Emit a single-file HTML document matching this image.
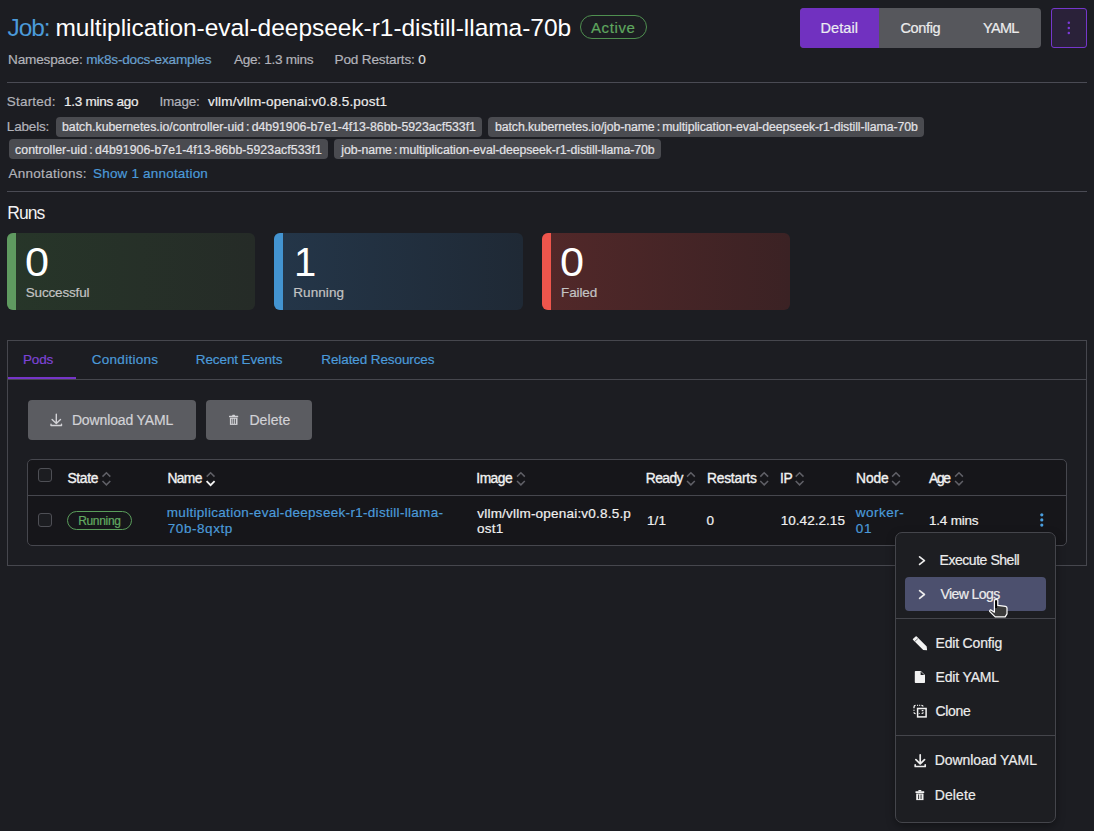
<!DOCTYPE html>
<html><head><meta charset="utf-8">
<style>
*{box-sizing:border-box;margin:0;padding:0}
html,body{width:1094px;height:831px;overflow:hidden;background:#1c1d22;font-family:"Liberation Sans",sans-serif}
.s{position:absolute}
.t{position:absolute;white-space:nowrap;line-height:1}
.bm{display:inline-block;width:0;height:0;vertical-align:baseline}
.hr{position:absolute;left:7px;width:1080px;height:1px;background:#4a4b54}
.chip{height:20px;background:#4a4b50;border-radius:4px}
.card{top:233px;width:248px;height:77px;border-radius:6px;overflow:hidden}
.card .bar{position:absolute;left:0;top:0;bottom:0;width:9px}
.btn{top:400px;height:40px;background:#5b5c61;border-radius:4px}
.cb{left:38px;width:14px;height:14px;border:1.5px solid #4e4f55;border-radius:3px;background:#1c1d21}
</style></head><body>
<!-- Active badge -->
<div class="s" style="left:580px;top:15px;width:67px;height:24px;border:1px solid #4f8f50;border-radius:12px"></div>

<!-- Button group -->
<div class="s" style="left:800px;top:8px;width:241px;height:40px;border-radius:4px;background:#56575c;overflow:hidden">
  <div class="s" style="left:0;top:0;width:79px;height:40px;background:#7131c0"></div>
</div>
<div class="s" style="left:1051px;top:8px;width:36px;height:40px;border:1px solid #7537cc;border-radius:3px;background:#2a2139"></div>
<svg class="s" style="left:1051px;top:8px" width="36" height="40" viewBox="0 0 36 40"><g fill="#7b3ad9"><circle cx="17.8" cy="14.8" r="1.25"/><circle cx="17.8" cy="19.9" r="1.25"/><circle cx="17.8" cy="25.1" r="1.25"/></g></svg>

<div class="hr" style="top:82px"></div>

<!-- chips -->
<div class="s chip" style="left:56px;top:116.5px;width:426px"></div>
<div class="s chip" style="left:488px;top:116.5px;width:436px"></div>
<div class="s chip" style="left:9px;top:139.2px;width:319px"></div>
<div class="s chip" style="left:334px;top:139.2px;width:327px"></div>

<div class="hr" style="top:191px"></div>

<!-- Cards -->
<div class="s card" style="left:7px;background:linear-gradient(90deg,#273629 0%,#252b27 100%)"><div class="bar" style="background:#5f9a60"></div></div>
<div class="s card" style="left:274px;width:248.6px;background:linear-gradient(90deg,#243649 0%,#1f2935 100%)"><div class="bar" style="background:#4394d1"></div></div>
<div class="s card" style="left:542px;background:linear-gradient(90deg,#522829 0%,#3b2224 100%)"><div class="bar" style="background:#ee554c"></div></div>

<!-- Tabs panel -->
<div class="s" style="left:7px;top:340px;width:1080px;height:226px;border:1px solid #46474e"></div>
<div class="s" style="left:8px;top:379px;width:1078px;height:1px;background:#46474e"></div>
<div class="s" style="left:8px;top:377px;width:68px;height:2px;background:#7535c8"></div>

<!-- Buttons -->
<div class="s btn" style="left:28px;width:168px"></div>
<div class="s btn" style="left:206px;width:106px"></div>
<svg class="s" style="left:48px;top:411px" width="16" height="17" viewBox="0 0 16 17"><g fill="none" stroke="#d2d2d6" stroke-width="1.4" stroke-linecap="round" stroke-linejoin="round"><path d="M8.3 3.2V12.2M4.1 8.6L8.3 12.6L12.5 8.6"/><path d="M3 13.3V14.5H13.5V13.3"/></g></svg>
<svg class="s" style="left:227px;top:413px" width="14" height="14" viewBox="0 0 14 14"><g fill="#d2d2d6"><rect x="2" y="2.7" width="9.2" height="1.6" rx=".4"/><rect x="5.2" y="1.7" width="2.8" height="1.4" rx=".5"/><path d="M2.9 4.7H10.5V11.9H2.9Z"/></g><g fill="#5b5c61"><rect x="4.4" y="5.8" width=".9" height="5"/><rect x="6.25" y="5.8" width=".9" height="5"/><rect x="8.1" y="5.8" width=".9" height="5"/></g></svg>

<!-- Table -->
<div class="s" style="left:27px;top:459px;width:1040px;height:87px;border:1px solid #46474e;border-radius:5px;background:#16161a"></div>
<div class="s" style="left:28px;top:495px;width:1038px;height:1px;background:#46474e"></div>
<div class="s cb" style="top:468px"></div>
<div class="s cb" style="top:513px"></div>
<svg class="s" style="left:0;top:460px" width="1094" height="30" viewBox="0 460 1094 30"><g fill="none" stroke="#606067" stroke-width="1.5" stroke-linecap="butt" stroke-linejoin="miter"><path d="M102.5 476.6L106.4 472.7L110.3 476.6M102.5 481L106.4 484.9L110.3 481"/><path d="M517.0 476.6L520.9 472.7L524.8 476.6M517.0 481L520.9 484.9L524.8 481"/><path d="M687.0 476.6L690.9 472.7L694.8 476.6M687.0 481L690.9 484.9L694.8 481"/><path d="M760.3 476.6L764.2 472.7L768.1 476.6M760.3 481L764.2 484.9L768.1 481"/><path d="M795.7 476.6L799.6 472.7L803.5 476.6M795.7 481L799.6 484.9L803.5 481"/><path d="M892.1 476.6L896.0 472.7L899.9 476.6M892.1 481L896.0 484.9L899.9 481"/><path d="M955.1 476.6L959.0 472.7L962.9 476.6M955.1 481L959.0 484.9L962.9 481"/><path d="M206.7 476.6L210.6 472.7L214.5 476.6"/></g><path d="M206.6 481.2L210.6 485.2L214.6 481.2" fill="none" stroke="#f4f4f4" stroke-width="1.8" stroke-linecap="butt"/></svg>
<div class="s" style="left:67px;top:511px;width:65px;height:19px;border:1px solid #5a9d5b;border-radius:10px"></div>
<svg class="s" style="left:1032px;top:508px" width="20" height="24" viewBox="0 0 20 24"><g fill="#4a9fe0"><circle cx="9.8" cy="6.8" r="1.6"/><circle cx="9.8" cy="11.9" r="1.6"/><circle cx="9.8" cy="17.1" r="1.6"/></g></svg>

<!-- Menu -->
<div class="s" style="left:895px;top:532px;width:161px;height:291px;border:1px solid #44454b;border-radius:7px;background:#1d1e22;box-shadow:0 3px 8px rgba(0,0,0,.35)"></div>
<div class="s" style="left:905px;top:577px;width:141px;height:34px;border-radius:4px;background:#4c506e"></div>
<div class="s" style="left:896px;top:618px;width:159px;height:1px;background:#44454b"></div>
<div class="s" style="left:896px;top:735px;width:159px;height:1px;background:#44454b"></div>
<svg class="s" style="left:900px;top:540px" width="160" height="280" viewBox="900 540 160 280">
<g fill="none" stroke="#ececec" stroke-width="1.7" stroke-linecap="round" stroke-linejoin="round">
<path d="M919.6 556.8L924.4 560.6L919.6 564.4"/>
<path d="M919.6 590.7L924.4 594.5L919.6 598.3"/>
<path d="M920.2 754.8V763.3M915.9 759.7L920.2 763.9L924.5 759.7M915.2 764.8V766.5H925.2V764.8"/>
</g>
<g fill="#f2f2f2">
<path d="M912.9 639.7Q912.6 639.2 913.1 638.7L915.6 636.5Q916.2 636.1 916.7 636.6L926.7 646.4L927.1 650.3L923.2 650Z"/>
<path d="M915.6 671L920.8 671L925 675V682.2Q925 683 924.2 683H915.6Q914.8 683 914.8 682.2V671.8Q914.8 671 915.6 671Z"/>
<rect x="915.4" y="791.3" width="8.9" height="1.6" rx=".4"/><rect x="918.3" y="790" width="3.1" height="1.5" rx=".5"/><path d="M916.2 793.5H923.5V800.1H916.2Z"/>
</g>
<path d="M920.6 671.6V675.1H924.3" fill="#1d1e22"/>
<path d="M914.9 641.3L917.9 638.6" stroke="#1d1e22" stroke-width=".6"/>
<g fill="#1d1e22"><rect x="918.2" y="794.5" width=".9" height="4.6"/><rect x="920.6" y="794.5" width=".9" height="4.6"/></g>
<g fill="none" stroke="#f2f2f2" stroke-width="1.5">
<rect x="917.6" y="708.5" width="8.5" height="8.4"/>
<path d="M914 708.2V707Q914 705.3 915.6 705.3M917.1 705.3H918.1M919.2 705.3H920.2M921.4 705.3Q923 705.3 923 706.6M914 709.8V710.8M914 712.2Q914 713.7 915.6 713.7" stroke-width="1.3"/>
<path d="M921.7 710.6H923.4M923.2 712.2Q923.2 713.5 921.6 713.5M919.3 713.3V713.9" stroke-width="1.1"/>
</g>
</svg>

<div class="t" id="titlej" style="left:7.50px;top:15.72px;font-size:24.5px;letter-spacing:-1.067px;font-weight:400;color:#4b9ad9">Job:</div>
<div class="t" id="title" style="left:55.50px;top:15.72px;font-size:24.5px;letter-spacing:-0.038px;font-weight:400;color:#ffffff">multiplication-eval-deepseek-r1-distill-llama-70b</div>
<div class="t" id="active" style="left:591.00px;top:19.72px;font-size:15px;letter-spacing:0.600px;font-weight:400;color:#5fa65f;-webkit-text-stroke:.2px #5fa65f">Active</div>
<div class="t" id="detail" style="left:820.50px;top:20.70px;font-size:14.5px;letter-spacing:0.080px;font-weight:400;color:#ececf2;-webkit-text-stroke:.2px #ececf2">Detail</div>
<div class="t" id="config" style="left:900.50px;top:20.70px;font-size:14.5px;letter-spacing:-0.360px;font-weight:400;color:#ececec;-webkit-text-stroke:.2px #ececec">Config</div>
<div class="t" id="yaml" style="left:983.10px;top:20.81px;font-size:14.5px;letter-spacing:-0.733px;font-weight:400;color:#ececec;-webkit-text-stroke:.2px #ececec">YAML</div>
<div class="t" id="ns" style="left:8.00px;top:52.90px;font-size:13.6px;letter-spacing:-0.179px;font-weight:400;color:#b2b3ba;-webkit-text-stroke:.2px #b2b3ba">Namespace: <span style="color:#4b9ad9">mk8s-docs-examples</span></div>
<div class="t" id="age" style="left:234.00px;top:52.90px;font-size:13.6px;letter-spacing:-0.300px;font-weight:400;color:#b2b3ba;-webkit-text-stroke:.2px #b2b3ba">Age: 1.3 mins</div>
<div class="t" id="podr" style="left:334.50px;top:52.90px;font-size:13.6px;letter-spacing:-0.171px;font-weight:400;color:#b2b3ba;-webkit-text-stroke:.2px #b2b3ba">Pod Restarts: <span style="color:#ececec">0</span></div>
<div class="t" id="started" style="left:6.80px;top:94.70px;font-size:13.5px;letter-spacing:0.200px;font-weight:400;color:#b2b3ba;-webkit-text-stroke:.2px #b2b3ba">Started:</div>
<div class="t" id="startedv" style="left:64.10px;top:94.70px;font-size:13.5px;letter-spacing:-0.273px;font-weight:400;color:#ececec;-webkit-text-stroke:.2px #ececec">1.3 mins ago</div>
<div class="t" id="imagel" style="left:159.50px;top:94.70px;font-size:13.5px;letter-spacing:-0.200px;font-weight:400;color:#b2b3ba;-webkit-text-stroke:.2px #b2b3ba">Image:</div>
<div class="t" id="imagev" style="left:208.00px;top:94.70px;font-size:13.5px;letter-spacing:0.179px;font-weight:400;color:#ececec;-webkit-text-stroke:.2px #ececec">vllm/vllm-openai:v0.8.5.post1</div>
<div class="t" id="labels" style="left:6.80px;top:120.10px;font-size:13.5px;letter-spacing:-0.167px;font-weight:400;color:#b2b3ba;-webkit-text-stroke:.2px #b2b3ba">Labels:</div>
<div class="t" id="chip1" style="left:62.00px;top:120.91px;font-size:12.3px;letter-spacing:0.000px;font-weight:400;color:#e2e2e6;-webkit-text-stroke:.2px #e2e2e6;word-spacing:-1.2px">batch.kubernetes.io/controller-uid : d4b91906-b7e1-4f13-86bb-5923acf533f1</div>
<div class="t" id="chip2" style="left:495.00px;top:120.91px;font-size:12.3px;letter-spacing:-0.086px;font-weight:400;color:#e2e2e6;-webkit-text-stroke:.2px #e2e2e6;word-spacing:-1.2px">batch.kubernetes.io/job-name : multiplication-eval-deepseek-r1-distill-llama-70b</div>
<div class="t" id="chip3" style="left:15.00px;top:143.71px;font-size:12.3px;letter-spacing:0.069px;font-weight:400;color:#e2e2e6;-webkit-text-stroke:.2px #e2e2e6;word-spacing:-1.2px">controller-uid : d4b91906-b7e1-4f13-86bb-5923acf533f1</div>
<div class="t" id="chip4" style="left:341.30px;top:143.71px;font-size:12.3px;letter-spacing:-0.095px;font-weight:400;color:#e2e2e6;-webkit-text-stroke:.2px #e2e2e6;word-spacing:-1.2px">job-name : multiplication-eval-deepseek-r1-distill-llama-70b</div>
<div class="t" id="annot" style="left:8.50px;top:166.90px;font-size:13.5px;letter-spacing:0.273px;font-weight:400;color:#b2b3ba;-webkit-text-stroke:.2px #b2b3ba">Annotations:</div>
<div class="t" id="show" style="left:93.00px;top:166.90px;font-size:13.5px;letter-spacing:0.188px;font-weight:400;color:#4b9ad9;-webkit-text-stroke:.2px #4b9ad9">Show 1 annotation</div>
<div class="t" id="runs" style="left:7.20px;top:204.70px;font-size:17.5px;letter-spacing:-0.933px;font-weight:400;color:#f2f2f2">Runs</div>
<div class="t" id="n1" style="left:24.70px;top:241.61px;font-size:40px;letter-spacing:0.000px;font-weight:400;color:#ffffff;transform:scaleX(1.08);transform-origin:0 0">0</div>
<div class="t" id="n2" style="left:294.00px;top:241.61px;font-size:40px;letter-spacing:0.000px;font-weight:400;color:#ffffff">1</div>
<div class="t" id="n3" style="left:560.30px;top:241.61px;font-size:40px;letter-spacing:0.000px;font-weight:400;color:#ffffff;transform:scaleX(1.08);transform-origin:0 0">0</div>
<div class="t" id="l1" style="left:25.70px;top:285.51px;font-size:13.5px;letter-spacing:-0.156px;font-weight:400;color:#c3c3c3;-webkit-text-stroke:.2px #c3c3c3">Successful</div>
<div class="t" id="l2" style="left:293.20px;top:285.51px;font-size:13.5px;letter-spacing:0.100px;font-weight:400;color:#c3c3c3;-webkit-text-stroke:.2px #c3c3c3">Running</div>
<div class="t" id="l3" style="left:561.00px;top:285.51px;font-size:13.5px;letter-spacing:-0.120px;font-weight:400;color:#c3c3c3;-webkit-text-stroke:.2px #c3c3c3">Failed</div>
<div class="t" id="tpods" style="left:22.90px;top:353.10px;font-size:13.5px;letter-spacing:-0.133px;font-weight:400;color:#7d44d6;-webkit-text-stroke:.2px #7d44d6">Pods</div>
<div class="t" id="tcond" style="left:91.80px;top:353.10px;font-size:13.5px;letter-spacing:0.267px;font-weight:400;color:#4b9ad9;-webkit-text-stroke:.2px #4b9ad9">Conditions</div>
<div class="t" id="trec" style="left:195.80px;top:353.10px;font-size:13.5px;letter-spacing:-0.100px;font-weight:400;color:#4b9ad9;-webkit-text-stroke:.2px #4b9ad9">Recent Events</div>
<div class="t" id="trel" style="left:321.30px;top:353.10px;font-size:13.5px;letter-spacing:-0.100px;font-weight:400;color:#4b9ad9;-webkit-text-stroke:.2px #4b9ad9">Related Resources</div>
<div class="t" id="bdl" style="left:71.90px;top:413.21px;font-size:14px;letter-spacing:-0.133px;font-weight:400;color:#d2d2d6;-webkit-text-stroke:.2px #d2d2d6">Download YAML</div>
<div class="t" id="bdel" style="left:249.40px;top:413.21px;font-size:14px;letter-spacing:0.080px;font-weight:400;color:#d2d2d6;-webkit-text-stroke:.2px #d2d2d6">Delete</div>
<div class="t" id="hstate" style="left:67.40px;top:472.31px;font-size:13.8px;letter-spacing:-0.300px;font-weight:400;color:#f2f2f2;-webkit-text-stroke:.35px #f2f2f2">State</div>
<div class="t" id="hname" style="left:167.50px;top:472.31px;font-size:13.8px;letter-spacing:-0.667px;font-weight:400;color:#f2f2f2;-webkit-text-stroke:.35px #f2f2f2">Name</div>
<div class="t" id="himage" style="left:476.30px;top:472.31px;font-size:13.8px;letter-spacing:-0.500px;font-weight:400;color:#f2f2f2;-webkit-text-stroke:.35px #f2f2f2">Image</div>
<div class="t" id="hready" style="left:645.80px;top:472.31px;font-size:13.8px;letter-spacing:-0.550px;font-weight:400;color:#f2f2f2;-webkit-text-stroke:.35px #f2f2f2">Ready</div>
<div class="t" id="hrest" style="left:706.90px;top:472.31px;font-size:13.8px;letter-spacing:-0.200px;font-weight:400;color:#f2f2f2;-webkit-text-stroke:.35px #f2f2f2">Restarts</div>
<div class="t" id="hip" style="left:779.90px;top:472.31px;font-size:13.8px;letter-spacing:-0.200px;font-weight:400;color:#f2f2f2;-webkit-text-stroke:.35px #f2f2f2">IP</div>
<div class="t" id="hnode" style="left:856.00px;top:472.31px;font-size:13.8px;letter-spacing:-0.067px;font-weight:400;color:#f2f2f2;-webkit-text-stroke:.35px #f2f2f2">Node</div>
<div class="t" id="hage" style="left:929.10px;top:472.31px;font-size:13.8px;letter-spacing:-1.300px;font-weight:400;color:#f2f2f2;-webkit-text-stroke:.35px #f2f2f2">Age</div>
<div class="t" id="running" style="left:78.20px;top:514.91px;font-size:12px;letter-spacing:-0.333px;font-weight:400;color:#62aa62;-webkit-text-stroke:.2px #62aa62">Running</div>
<div class="t" id="name1" style="left:166.80px;top:506.01px;font-size:13.5px;letter-spacing:0.302px;font-weight:400;color:#4b9ad9;-webkit-text-stroke:.2px #4b9ad9">multiplication-eval-deepseek-r1-distill-llama-</div>
<div class="t" id="name2" style="left:167.80px;top:521.90px;font-size:13.5px;letter-spacing:0.550px;font-weight:400;color:#4b9ad9;-webkit-text-stroke:.2px #4b9ad9">70b-8qxtp</div>
<div class="t" id="img1" style="left:477.30px;top:506.81px;font-size:13.5px;letter-spacing:0.208px;font-weight:400;color:#f0f0f0;-webkit-text-stroke:.2px #f0f0f0">vllm/vllm-openai:v0.8.5.p</div>
<div class="t" id="img2" style="left:477.00px;top:521.51px;font-size:13.5px;letter-spacing:0.267px;font-weight:400;color:#f0f0f0;-webkit-text-stroke:.2px #f0f0f0">ost1</div>
<div class="t" id="ready" style="left:647.00px;top:513.90px;font-size:13.5px;letter-spacing:0.100px;font-weight:400;color:#f0f0f0;-webkit-text-stroke:.2px #f0f0f0">1/1</div>
<div class="t" id="rest" style="left:706.40px;top:513.90px;font-size:13.5px;letter-spacing:0.000px;font-weight:400;color:#f0f0f0;-webkit-text-stroke:.2px #f0f0f0">0</div>
<div class="t" id="ip" style="left:780.70px;top:514.20px;font-size:13.5px;letter-spacing:0.044px;font-weight:400;color:#f0f0f0;-webkit-text-stroke:.2px #f0f0f0">10.42.2.15</div>
<div class="t" id="wk1" style="left:855.80px;top:506.20px;font-size:13.5px;letter-spacing:0.500px;font-weight:400;color:#4b9ad9;-webkit-text-stroke:.2px #4b9ad9">worker-</div>
<div class="t" id="wk2" style="left:855.80px;top:522.01px;font-size:13.5px;letter-spacing:0.600px;font-weight:400;color:#4b9ad9;-webkit-text-stroke:.2px #4b9ad9">01</div>
<div class="t" id="rage" style="left:929.00px;top:514.20px;font-size:13.5px;letter-spacing:-0.200px;font-weight:400;color:#f0f0f0;-webkit-text-stroke:.2px #f0f0f0">1.4 mins</div>
<div class="t" id="mexec" style="left:939.50px;top:552.91px;font-size:14px;letter-spacing:-0.450px;font-weight:400;color:#ececec;-webkit-text-stroke:.2px #ececec">Execute Shell</div>
<div class="t" id="mview" style="left:940.50px;top:586.82px;font-size:14px;letter-spacing:-0.575px;font-weight:400;color:#ececec;-webkit-text-stroke:.2px #ececec">View Logs</div>
<div class="t" id="medc" style="left:935.50px;top:635.91px;font-size:14px;letter-spacing:-0.180px;font-weight:400;color:#ececec;-webkit-text-stroke:.2px #ececec">Edit Config</div>
<div class="t" id="medy" style="left:935.50px;top:669.70px;font-size:14px;letter-spacing:-0.150px;font-weight:400;color:#ececec;-webkit-text-stroke:.2px #ececec">Edit YAML</div>
<div class="t" id="mclone" style="left:935.50px;top:703.91px;font-size:14px;letter-spacing:-0.350px;font-weight:400;color:#ececec;-webkit-text-stroke:.2px #ececec">Clone</div>
<div class="t" id="mdl" style="left:934.80px;top:753.01px;font-size:14px;letter-spacing:-0.067px;font-weight:400;color:#ececec;-webkit-text-stroke:.2px #ececec">Download YAML</div>
<div class="t" id="mdel" style="left:934.80px;top:788.01px;font-size:14px;letter-spacing:0.080px;font-weight:400;color:#ececec;-webkit-text-stroke:.2px #ececec">Delete</div>
<svg class="s" style="left:980px;top:590px" width="40" height="40" viewBox="980 590 40 40">
<path d="M994.4 599.9Q996.1 599.2 997.8 599.9V605.4L1005.5 606.3Q1007 606.6 1007 608V613.9L1005.2 616.9H995.2L989.6 611.3Q989.4 610.4 990.6 609.8L994.4 612.2Z" fill="#3b3b3b" stroke="#ffffff" stroke-width="1.2" stroke-linejoin="round"/>
<path d="M996.1 600.5V608" stroke="#000" stroke-width="1.8"/>
</svg>
</body></html>
